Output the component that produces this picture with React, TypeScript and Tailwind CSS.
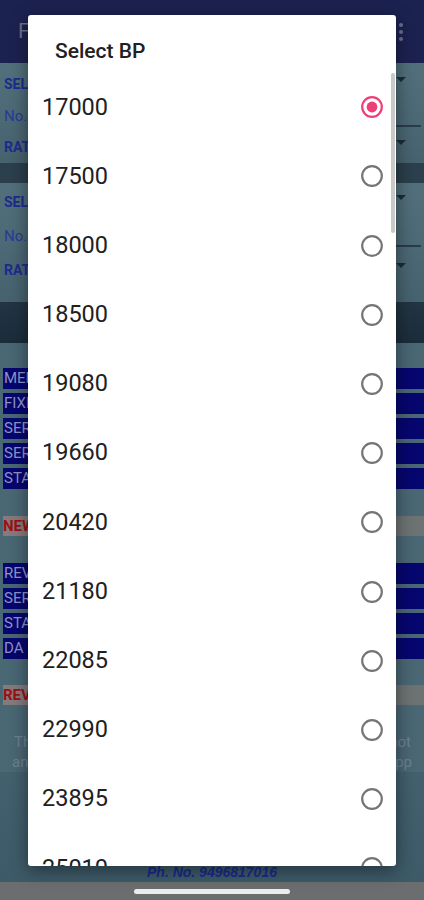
import React from "react";

const items = ["17000","17500","18000","18500","19080","19660","20420","21180","22085","22990","23895","25010"];

function Radio({ checked }: { checked: boolean }) {
  return (
    <svg width="22" height="22" viewBox="0 0 22 22" className="shrink-0">
      <circle cx="11" cy="11" r="9.8" fill="none" stroke={checked ? "#ee3f78" : "#757575"} strokeWidth="2.2" />
      {checked && <circle cx="11" cy="11" r="5.4" fill="#ee3f78" />}
    </svg>
  );
}

function Tri({ className = "" }: { className?: string }) {
  return (
    <svg width="10" height="6" viewBox="0 0 10 6" className={className}>
      <polygon points="0,0 10,0 5,5" fill="#1d2c38" />
    </svg>
  );
}

function BlueRow({ label }: { label: string }) {
  return (
    <div className="ml-[3px] h-[21px] bg-[#06066f] flex items-center pl-[1px]">
      <span className="text-[15px] leading-none text-[#8e93c6] whitespace-nowrap">{label}</span>
    </div>
  );
}

function GrayRow({ label }: { label: string }) {
  return (
    <div className="ml-[3px] h-[20px] bg-[#6d7272] flex items-center">
      <span className="h-full flex items-center bg-[#857a7e] pr-2 text-[15px] font-bold leading-none text-[#9c1010] whitespace-nowrap">{label}</span>
    </div>
  );
}

export default function App() {
  return (
    <div className="relative w-[424px] h-[900px] overflow-hidden bg-[#486470] font-['Roboto','Noto_Sans',sans-serif]">
      {/* app bar */}
      <div className="h-[63px] bg-[#1c2250] flex items-center justify-between pl-[18px] pr-[21px]">
        <span className="text-[21px] text-[#6b7192] leading-none">FIXATION</span>
        <div className="flex flex-col gap-[3px]">
          <span className="w-[4px] h-[4px] rounded-full bg-[#6b7192]" />
          <span className="w-[4px] h-[4px] rounded-full bg-[#6b7192]" />
          <span className="w-[4px] h-[4px] rounded-full bg-[#6b7192]" />
        </div>
      </div>

      {/* card 1 */}
      <div className="h-[100px] bg-gradient-to-b from-[#52707c] to-[#46626e] pt-[6px] flex flex-col">
        <div className="h-[34px] flex items-center justify-between pl-[4px] pr-[18px]">
          <span className="text-[14px] font-bold text-[#1d2b8e]">SELECT PAY SCALE</span>
          <Tri className="mb-[10px]" />
        </div>
        <div className="h-[34px] flex items-center justify-between pl-[4px] pr-[3px]">
          <span className="text-[15px] text-[#283a97]">No. of increments</span>
          <div className="w-[25px] h-[1.5px] bg-[#2a3c48] mt-[20px]" />
        </div>
        <div className="h-[34px] flex items-center justify-between pl-[4px] pr-[18px]">
          <span className="text-[14px] font-bold text-[#1d2b8e]">RATE OF DA</span>
          <Tri className="mb-[8px]" />
        </div>
      </div>
      <div className="h-[20px] bg-[#2b3f4c]" />

      {/* card 2 */}
      <div className="h-[119px] bg-gradient-to-b from-[#52707c] to-[#46626e] pt-[2px] flex flex-col">
        <div className="h-[34px] flex items-center justify-between pl-[4px] pr-[18px]">
          <span className="text-[14px] font-bold text-[#1d2b8e]">SELECT PAY SCALE</span>
          <Tri className="mb-[8px]" />
        </div>
        <div className="h-[34px] flex items-center justify-between pl-[4px] pr-[3px]">
          <span className="text-[15px] text-[#283a97]">No.of increments</span>
          <div className="w-[25px] h-[1.5px] bg-[#2a3c48] mt-[20px]" />
        </div>
        <div className="h-[34px] flex items-center justify-between pl-[4px] pr-[18px]">
          <span className="text-[14px] font-bold text-[#1d2b8e]">RATE OF DA</span>
          <Tri className="mb-[8px]" />
        </div>
      </div>

      {/* dark band */}
      <div className="h-[41px] bg-gradient-to-b from-[#223544] to-[#1b2c3a]" />

      <div className="bg-[#4a6774] pt-[25px]">
        <div className="flex flex-col gap-[4px]">
          <BlueRow label="MERGED PAY" />
          <BlueRow label="FIXED PAY" />
          <BlueRow label="SERVICE WEIGHTAGE" />
          <BlueRow label="SERVICE" />
          <BlueRow label="STAGNATION" />
        </div>
        <div className="mt-[27px]">
          <GrayRow label="NEW PAY" />
        </div>
        <div className="mt-[27px] flex flex-col gap-[4px]">
          <BlueRow label="REVISED PAY" />
          <BlueRow label="SERVICE" />
          <BlueRow label="STAGNATION" />
          <BlueRow label="DA" />
        </div>
        <div className="mt-[26px]">
          <GrayRow label="REVISED" />
        </div>
        <div className="mt-[27px] text-[15px] leading-[20px] text-[#6a8390]">
          <div className="pl-[14px] pr-[13px] text-justify [text-align-last:justify]">This calculator is for reference only and is not</div>
          <div className="pl-[12px] pr-[12px] text-justify [text-align-last:justify]">an official one. Verify results with the app</div>
        </div>
      </div>
      <div className="bg-gradient-to-b from-[#42606d] to-[#3d5a68] h-[110px] flex flex-col justify-end">
        <div className="h-[16px] mb-[2px] flex items-center justify-center text-[14px] leading-none font-bold italic text-[#1a2a8c] font-['Liberation_Sans','Roboto',sans-serif]">
          Ph. No. 9496817016
        </div>
      </div>
      <div className="h-[18px] bg-[#6b6e6f] flex items-center justify-center">
        <div className="w-[156px] h-[5px] rounded-full bg-[#ececec]" />
      </div>

      {/* dialog */}
      <div className="absolute left-[28px] top-[15px] w-[368px] h-[851px] bg-white rounded-[3px] shadow-[0_4px_18px_rgba(0,0,0,0.45)] overflow-hidden">
        <div className="h-[57.7px] pl-[27px] pt-[26px]">
          <div className="text-[21px] leading-[21px] font-medium text-[#212121]">Select BP</div>
        </div>
        <div className="flex flex-col">
          {items.map((v, i) => (
            <div key={v} className="h-[69.2px] shrink-0 flex items-center justify-between pl-[14px] pr-[13px]">
              <span className="text-[23.5px] leading-none text-[#212121]">{v}</span>
              <Radio checked={i === 0} />
            </div>
          ))}
        </div>
        <div className="absolute right-[1px] top-[58px] w-[4px] h-[160px] bg-[#c9c9c9] rounded-[2px]" />
      </div>
    </div>
  );
}
